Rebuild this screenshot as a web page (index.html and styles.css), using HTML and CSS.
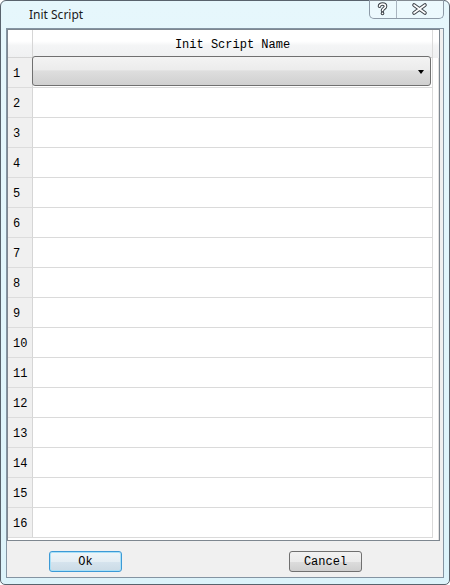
FILE: index.html
```html
<!DOCTYPE html>
<html lang="en">
<head>
    <meta charset="UTF-8">
    <title>Init Script</title>
    <link rel="stylesheet" href="styles.css">
</head>
<body>
    <div class="window">
        <div class="titlebar">
            <span class="title">Init Script</span>
            <div class="caption-btns">
                <div class="cap cap-help">
                    <svg width="27" height="18" viewBox="0 0 27 18">
                        <path class="glyph-out" d="M9.5 6.2 C9.5 3.3 15.5 3.3 15.5 6.3 C15.5 8.4 12.5 8.4 12.5 10.4"/>
                        <path class="glyph-out" d="M12.5 13.3 L12.5 13.4"/>
                        <path class="glyph-in" d="M9.5 6.2 C9.5 3.3 15.5 3.3 15.5 6.3 C15.5 8.4 12.5 8.4 12.5 10.4"/>
                        <path class="glyph-in" d="M12.5 13.3 L12.5 13.4"/>
                    </svg>
                </div>
                <div class="cap cap-close">
                    <svg width="46" height="18" viewBox="0 0 46 18">
                        <path class="glyph-out" d="M17 5 L28 13 M28 5 L17 13"/>
                        <path class="glyph-in" d="M17 5 L28 13 M28 5 L17 13"/>
                    </svg>
                </div>
            </div>
        </div>

        <div class="client">
            <div class="table">
                <div class="row head">
                    <div class="num"></div>
                    <div class="cell">Init Script Name</div>
                </div>
                <div class="row">
                    <div class="num">1</div>
                    <div class="cell">
                        <div class="combo"><span class="arrow"></span></div>
                    </div>
                </div>
                <div class="row"><div class="num">2</div><div class="cell"></div></div>
                <div class="row"><div class="num">3</div><div class="cell"></div></div>
                <div class="row"><div class="num">4</div><div class="cell"></div></div>
                <div class="row"><div class="num">5</div><div class="cell"></div></div>
                <div class="row"><div class="num">6</div><div class="cell"></div></div>
                <div class="row"><div class="num">7</div><div class="cell"></div></div>
                <div class="row"><div class="num">8</div><div class="cell"></div></div>
                <div class="row"><div class="num">9</div><div class="cell"></div></div>
                <div class="row"><div class="num">10</div><div class="cell"></div></div>
                <div class="row"><div class="num">11</div><div class="cell"></div></div>
                <div class="row"><div class="num">12</div><div class="cell"></div></div>
                <div class="row"><div class="num">13</div><div class="cell"></div></div>
                <div class="row"><div class="num">14</div><div class="cell"></div></div>
                <div class="row"><div class="num">15</div><div class="cell"></div></div>
                <div class="row"><div class="num">16</div><div class="cell"></div></div>
            </div>

            <div class="buttons">
                <button class="btn default">Ok</button>
                <button class="btn">Cancel</button>
            </div>
        </div>
    </div>
</body>
</html>
```

FILE: styles.css
```css
* {
    box-sizing: border-box;
}
html, body {
    margin: 0;
    padding: 0;
}
body {
    width: 450px;
    height: 585px;
    overflow: hidden;
    background: #fff;
}
.window {
    height: 585px;
    border: 1px solid #59636d;
    border-radius: 6px 6px 5px 5px;
    background: linear-gradient(to bottom, #e6f7fc 0%, #dcf3fa 100%);
    display: flex;
    flex-direction: column;
}
.titlebar {
    height: 27px;
    display: flex;
    align-items: flex-start;
}
.title {
    font-family: "Noto Sans", "Open Sans", sans-serif;
    font-size: 12px;
    color: #1a1a1a;
    margin-left: 28px;
    padding-top: 5px;
}
.caption-btns {
    margin-left: auto;
    margin-right: 5px;
    margin-top: -1px;
    height: 19px;
    display: flex;
    border: 1px solid #8d9aa7;
    border-top: none;
    border-radius: 0 0 5px 5px;
    background: rgba(255, 255, 255, 0.25);
}
.cap {
    height: 18px;
}
.cap svg {
    display: block;
}
.cap-help {
    width: 27px;
    border-right: 1px solid #a8b4bf;
}
.cap-close {
    width: 46px;
}
.glyph-out {
    fill: none;
    stroke: #3c4248;
    stroke-width: 3.6;
    stroke-linecap: round;
    stroke-linejoin: round;
}
.glyph-in {
    fill: none;
    stroke: #fff;
    stroke-width: 1.6;
    stroke-linecap: round;
    stroke-linejoin: round;
}

.client {
    flex: 1;
    margin: 0 5px 6px 5px;
    border: 1px solid #8494a2;
    background: #f0f0f0;
    display: flex;
    flex-direction: column;
}
.table {
    width: 433px;
    height: 512px;
    border: 1px solid #7e8790;
    background: #fff;
    box-shadow: inset -1px 0 0 #e2e2e2;
    font-family: "Liberation Mono", monospace;
    font-size: 12px;
    color: #000;
}
.row {
    display: flex;
    height: 30px;
}
.num {
    width: 25px;
    border-right: 1px solid #d6d6d6;
    border-bottom: 1px solid #dcdcdc;
    background: #f0f0f0;
    padding-left: 5px;
    line-height: 32px;
}
.cell {
    width: 400px;
    border-right: 1px solid #dadada;
    border-bottom: 1px solid #dadada;
}
.head {
    height: 28px;
    background: linear-gradient(to bottom, #ffffff 0%, #ffffff 40%, #f4f5f6 55%, #eff0f1 100%);
}
.head .num,
.head .cell {
    background: transparent;
    border-bottom: 1px solid #d5d5d5;
}
.head .cell {
    text-align: center;
    line-height: 31px;
}
.combo {
    margin: -2px 0 0 -1px;
    width: 399px;
    height: 30px;
    border: 1px solid #707070;
    border-radius: 3px;
    background: linear-gradient(to bottom, #f3f3f3 0%, #ececec 45%, #dedede 50%, #d0d0d0 100%);
    display: flex;
    align-items: center;
    justify-content: flex-end;
    padding-right: 6px;
}
.arrow {
    width: 0;
    height: 0;
    border-left: 3.5px solid transparent;
    border-right: 3.5px solid transparent;
    border-top: 4px solid #000;
    margin-top: 1px;
}

.buttons {
    display: flex;
    gap: 167px;
    padding: 10px 0 0 42px;
}
.btn {
    width: 73px;
    height: 21px;
    padding: 1px 0 0 0;
    border: 1px solid #707070;
    border-radius: 3px;
    background: linear-gradient(to bottom, #f2f2f2 0%, #ebebeb 50%, #dddddd 51%, #cfcfcf 100%);
    font-family: "Liberation Mono", monospace;
    font-size: 12px;
    color: #000;
}
.btn.default {
    border-color: #3c9ad6;
    box-shadow: inset 0 0 0 1px #a9e0f7;
    background: linear-gradient(to bottom, #eef5f9 0%, #e4eef4 50%, #d6e4ee 51%, #cbdbe6 100%);
}
```
